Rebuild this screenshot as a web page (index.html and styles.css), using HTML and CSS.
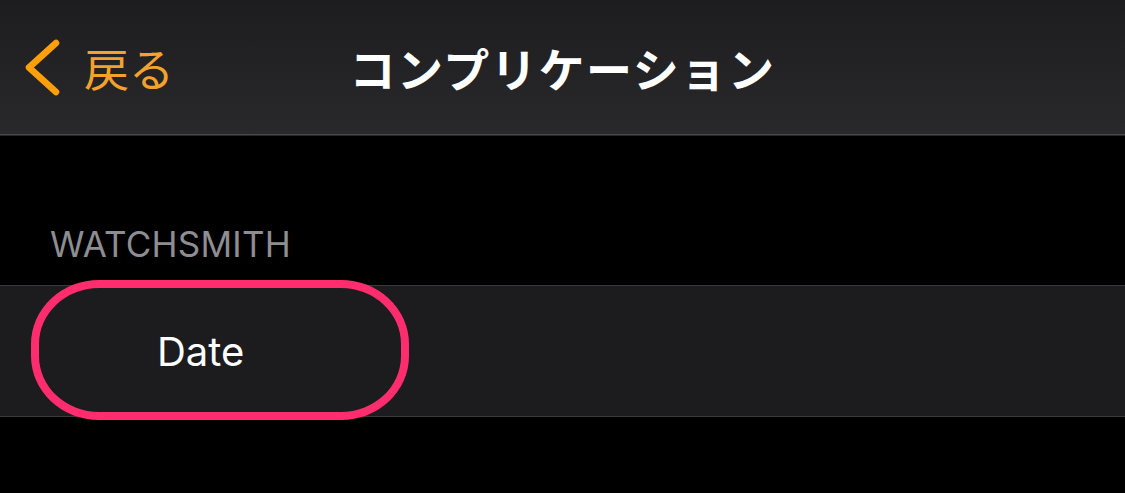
FILE: index.html
```html
<!DOCTYPE html>
<html lang="ja">
<head>
<meta charset="utf-8">
<title>コンプリケーション</title>
<link rel="stylesheet" href="styles.css">
</head>
<body>
  <header class="navbar">
    <a class="back">
      <svg class="chev" width="40" height="62" viewBox="0 0 40 62">
        <path d="M34 6 L7 30.5 L34 55" fill="none" stroke="#ff9f0a" stroke-width="6.5" stroke-linecap="round" stroke-linejoin="round"/>
      </svg>
      <span class="back-label">戻る</span>
    </a>
    <h1 class="title">コンプリケーション</h1>
    <div class="spacer"></div>
  </header>
  <main class="content">
    <div class="section-label">WATCHSMITH</div>
    <ul class="list">
      <li class="row">
        <span class="row-text">Date</span>
        <span class="highlight"></span>
      </li>
    </ul>
  </main>
</body>
</html>
```
FILE: styles.css
```css
html, body {
  margin: 0;
  padding: 0;
  background: #000;
  height: 100%;
  overflow: hidden;
}
body {
  font-family: Inter, "Noto Sans CJK JP", sans-serif;
  color: #fff;
}
.navbar {
  height: 134px;
  display: grid;
  grid-template-columns: 1fr auto 1fr;
  align-items: center;
  background: linear-gradient(#1d1d1f, #29292b);
  box-shadow: 0 1px 0 #4a4a4c, 0 2px 0 #262628;
}
.back {
  display: flex;
  align-items: center;
  padding-left: 22px;
  color: #ff9f0a;
}
.chev {
  display: block;
  margin-top: 2px;
}
.back-label {
  font-family: "Noto Sans CJK JP", sans-serif;
  font-size: 45px;
  font-weight: 400;
  margin-left: 22px;
  line-height: 1;
  color: #f4a22c;
}
.title {
  margin: 0;
  font-family: "Noto Sans CJK JP", sans-serif;
  font-size: 46px;
  font-weight: 700;
  letter-spacing: 1.6px;
  line-height: 1;
  color: #fff;
}
.content {
  padding-top: 88px;
}
.section-label {
  padding-left: 50px;
  font-size: 35px;
  line-height: 44px;
  color: #8d8d92;
  margin-bottom: 19px;
  letter-spacing: 0.2px;
}
.list {
  list-style: none;
  margin: 0;
  padding: 0;
}
.row {
  position: relative;
  height: 130px;
  display: flex;
  align-items: center;
  padding-left: 157px;
  background: #1c1c1e;
  border-top: 1px solid #3a3a3c;
  border-bottom: 1px solid #3a3a3c;
}
.row-text {
  font-size: 40px;
  color: #fff;
}
.highlight {
  position: absolute;
  left: 31px;
  top: -6px;
  width: 378px;
  height: 140px;
  box-sizing: border-box;
  border: 8px solid #ff2d6e;
  border-radius: 68px / 64px;
}
```
